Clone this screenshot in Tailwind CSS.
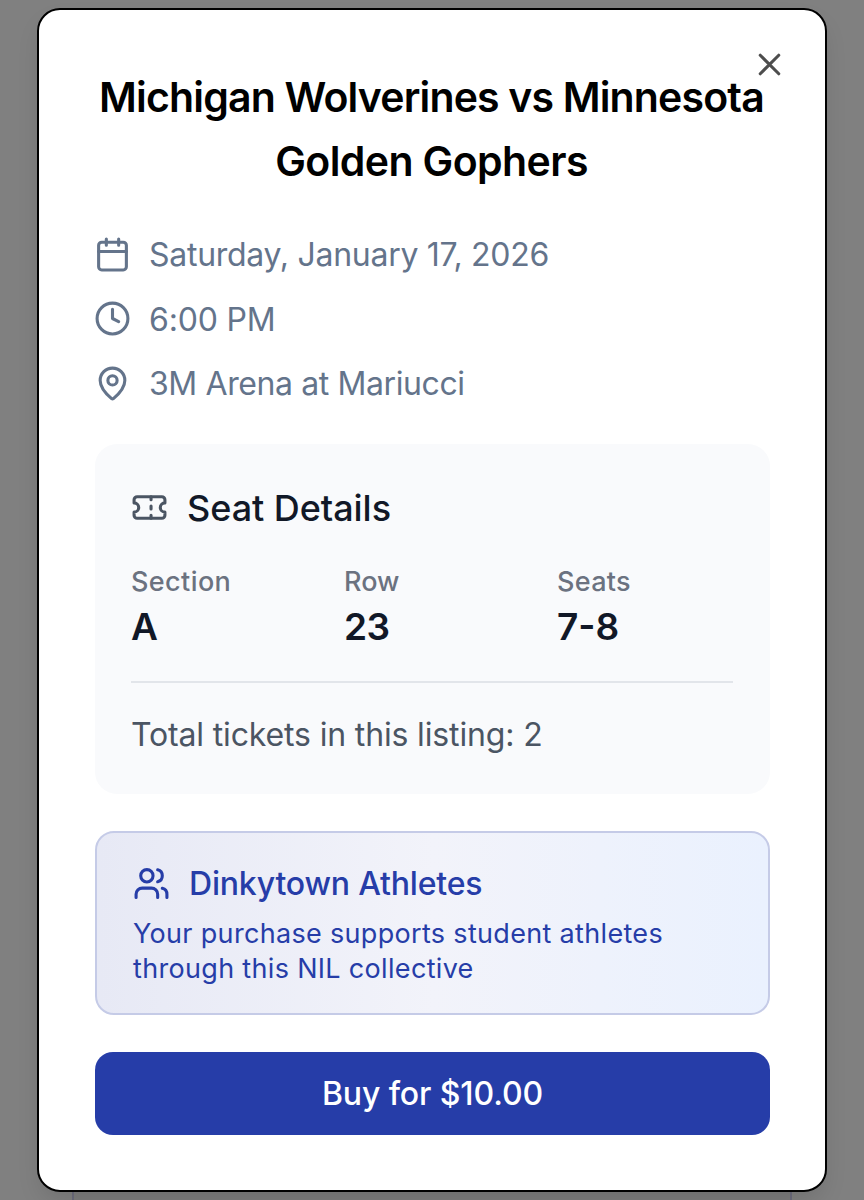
<!DOCTYPE html>
<html lang="en">
<head>
<meta charset="utf-8">
<title>Ticket listing</title>
<script src="https://cdn.jsdelivr.net/npm/@tailwindcss/browser@4"></script>
</head>
<body class="relative h-[1200px] overflow-hidden bg-[#808080] font-['Inter','Liberation_Sans',sans-serif]">
<div class="absolute left-[72px] top-[1180px] h-10 w-[720px] border-x-2 border-[#6b6b7c] bg-[#7c7c7c]"></div>
<main class="relative mx-auto mt-2 flex h-[1184px] w-[790px] flex-col rounded-[23px] border-2 border-black bg-white pl-[56px] pr-[55px] pt-[55px] shadow-[0_12px_24px_-4px_rgba(0,0,0,0.12)]">
  <button class="absolute right-[37px] top-[36px]" aria-label="Close">
    <svg class="block size-[37px]" viewBox="0 0 24 24" fill="none" stroke="#4d4d4d" stroke-width="2" stroke-linecap="round" stroke-linejoin="round"><path d="M18 6 6 18M6 6l12 12"/></svg>
  </button>
  <h1 class="-translate-x-px whitespace-nowrap text-center text-[41px] font-semibold leading-[64px] text-black"><span class="tracking-[-0.83px]">Michigan Wolverines vs Minnesota</span><br><span class="tracking-[-0.6px]">Golden Gophers</span></h1>
  <ul class="mt-[39px] flex flex-col gap-[18.5px] text-[32px] leading-[46px] text-[#64748b]">
    <li class="flex items-center gap-[18px]">
      <svg class="size-[37px] shrink-0 -translate-x-px -translate-y-px" viewBox="0 0 24 24" fill="none" stroke="currentColor" stroke-width="2" stroke-linecap="round" stroke-linejoin="round"><path d="M8 2v4M16 2v4"/><rect width="18" height="18" x="3" y="4" rx="2"/><path d="M3 10h18"/></svg>
      <span class="-translate-x-px tracking-[-0.28px]">Saturday, January 17, 2026</span>
    </li>
    <li class="flex items-center gap-[18px]">
      <svg class="size-[37px] shrink-0 -translate-x-px -translate-y-px" viewBox="0 0 24 24" fill="none" stroke="currentColor" stroke-width="2" stroke-linecap="round" stroke-linejoin="round"><circle cx="12" cy="12" r="10"/><path d="M12 6v6l4 2"/></svg>
      <span class="-translate-x-px tracking-[-0.2px]">6:00 PM</span>
    </li>
    <li class="flex items-center gap-[18px]">
      <svg class="size-[37px] shrink-0 -translate-x-px -translate-y-px" viewBox="0 0 24 24" fill="none" stroke="currentColor" stroke-width="2" stroke-linecap="round" stroke-linejoin="round"><path d="M20 10c0 4.993-5.539 10.193-7.399 11.799a1 1 0 0 1-1.202 0C9.539 20.193 4 14.993 4 10a8 8 0 0 1 16 0"/><circle cx="12" cy="10" r="3"/></svg>
      <span class="-translate-x-px tracking-[-0.4px]">3M Arena at Mariucci</span>
    </li>
  </ul>
  <section class="mt-[37px] flex h-[350px] shrink-0 flex-col rounded-[22px] bg-[#f9fafc] pl-[36px] pr-[37px] pt-[37px]">
    <h2 class="flex items-center gap-[19px] text-[36px] font-medium leading-[55px] tracking-[-0.05px] text-[#111827]">
      <svg class="size-[37px] shrink-0 -translate-y-px" viewBox="0 0 24 24" fill="none" stroke="#4b5563" stroke-width="2" stroke-linecap="round" stroke-linejoin="round"><path d="M2 9a3 3 0 0 1 0 6v2a2 2 0 0 0 2 2h16a2 2 0 0 0 2-2v-2a3 3 0 0 1 0-6V7a2 2 0 0 0-2-2H4a2 2 0 0 0-2 2Z"/><path d="M13 5v2M13 17v2M13 11v2"/></svg>
      <span>Seat Details</span>
    </h2>
    <dl class="mt-[27px] grid grid-cols-3 gap-x-[37px]">
      <div><dt class="text-[27px] font-medium leading-[37px] tracking-[0.4px] text-[#6b7280]">Section</dt><dd class="text-[37px] font-semibold leading-[54px] text-[#111827]">A</dd></div>
      <div><dt class="text-[27px] font-medium leading-[37px] text-[#6b7280]">Row</dt><dd class="text-[37px] font-semibold leading-[54px] tracking-[-0.5px] text-[#111827]">23</dd></div>
      <div><dt class="text-[27px] font-medium leading-[37px] tracking-[0.3px] text-[#6b7280]">Seats</dt><dd class="text-[37px] font-semibold leading-[54px] text-[#111827]">7-8</dd></div>
    </dl>
    <p class="mt-[27px] border-t-2 border-[#e2e5ea] pt-[27px] text-[32px] leading-[50px] tracking-[-0.15px] text-[#4b5563]">Total tickets in this listing: 2</p>
  </section>
  <section class="mt-[37px] flex h-[184px] shrink-0 flex-col rounded-[19px] border-2 border-[#c5cbe7] bg-linear-to-r from-[#e7e9f5] via-[#f2f3fa] to-[#eaf1fe] pl-[36px] pr-[37px] pt-[26px] text-[#263da8]">
    <h2 class="flex items-center gap-[19px] text-[32px] font-medium leading-[50px] tracking-[-0.18px]">
      <svg class="size-[37px] shrink-0 -translate-y-px" viewBox="0 0 24 24" fill="none" stroke="currentColor" stroke-width="2" stroke-linecap="round" stroke-linejoin="round"><path d="M16 21v-2a4 4 0 0 0-4-4H6a4 4 0 0 0-4 4v2"/><circle cx="9" cy="7" r="4"/><path d="M22 21v-2a4 4 0 0 0-3-3.87M16 3.13a4 4 0 0 1 0 7.75"/></svg>
      <span>Dinkytown Athletes</span>
    </h2>
    <p class="mt-[8px] whitespace-nowrap text-[27px] leading-[34.6px] tracking-[0.32px]">Your purchase supports student athletes<br>through this NIL collective</p>
  </section>
  <button class="mt-[37px] h-[83px] shrink-0 rounded-[18px] bg-[#263da8] text-[32px] font-medium tracking-[-0.1px] text-white"><span>Buy for $10.00</span></button>
</main>
</body>
</html>
